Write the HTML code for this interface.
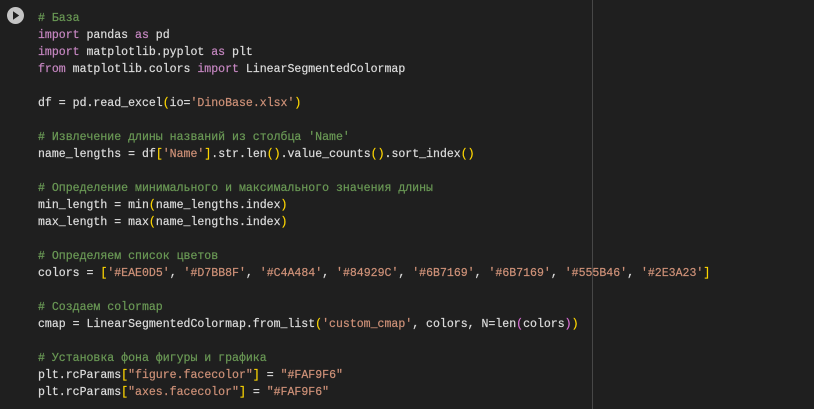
<!DOCTYPE html>
<html><head><meta charset="utf-8"><style>
html,body{margin:0;padding:0;background:#1f1f1f;width:814px;height:409px;overflow:hidden}
.code{position:absolute;left:38px;top:10px;font-family:"Liberation Mono","DejaVu Sans Mono",monospace;font-size:11.55px;line-height:17px;color:#dcdcdc;white-space:pre;margin:0;-webkit-text-stroke:0.2px}
.k{color:#c586c0}.s{color:#ce9178}.c{color:#6a9955}.y{color:#ffd700}.p{color:#da70d6}
.vl{position:absolute;left:592px;top:0;width:1px;height:409px;background:#474747}
</style></head><body>
<svg style="position:absolute;left:6px;top:6px" width="19" height="19" viewBox="0 0 19 19"><circle cx="9.5" cy="9.5" r="8.5" fill="#c4c4c4"/><path d="M7 5.3 L13.2 9.5 L7 13.7Z" fill="#1f1f1f"/></svg>
<div class="vl"></div>
<pre class="code"><span class="c"># База</span>
<span class="k">import</span> pandas <span class="k">as</span> pd
<span class="k">import</span> matplotlib.pyplot <span class="k">as</span> plt
<span class="k">from</span> matplotlib.colors <span class="k">import</span> LinearSegmentedColormap

df = pd.read_excel<span class="y">(</span>io=<span class="s">'DinoBase.xlsx'</span><span class="y">)</span>

<span class="c"># Извлечение длины названий из столбца 'Name'</span>
name_lengths = df<span class="y">[</span><span class="s">'Name'</span><span class="y">]</span>.str.len<span class="y">()</span>.value_counts<span class="y">()</span>.sort_index<span class="y">()</span>

<span class="c"># Определение минимального и максимального значения длины</span>
min_length = min<span class="y">(</span>name_lengths.index<span class="y">)</span>
max_length = max<span class="y">(</span>name_lengths.index<span class="y">)</span>

<span class="c"># Определяем список цветов</span>
colors = <span class="y">[</span><span class="s">'#EAE0D5'</span>, <span class="s">'#D7BB8F'</span>, <span class="s">'#C4A484'</span>, <span class="s">'#84929C'</span>, <span class="s">'#6B7169'</span>, <span class="s">'#6B7169'</span>, <span class="s">'#555B46'</span>, <span class="s">'#2E3A23'</span><span class="y">]</span>

<span class="c"># Создаем colormap</span>
cmap = LinearSegmentedColormap.from_list<span class="y">(</span><span class="s">'custom_cmap'</span>, colors, N=len<span class="p">(</span>colors<span class="p">)</span><span class="y">)</span>

<span class="c"># Установка фона фигуры и графика</span>
plt.rcParams<span class="y">[</span><span class="s">"figure.facecolor"</span><span class="y">]</span> = <span class="s">"#FAF9F6"</span>
plt.rcParams<span class="y">[</span><span class="s">"axes.facecolor"</span><span class="y">]</span> = <span class="s">"#FAF9F6"</span></pre>
</body></html>
